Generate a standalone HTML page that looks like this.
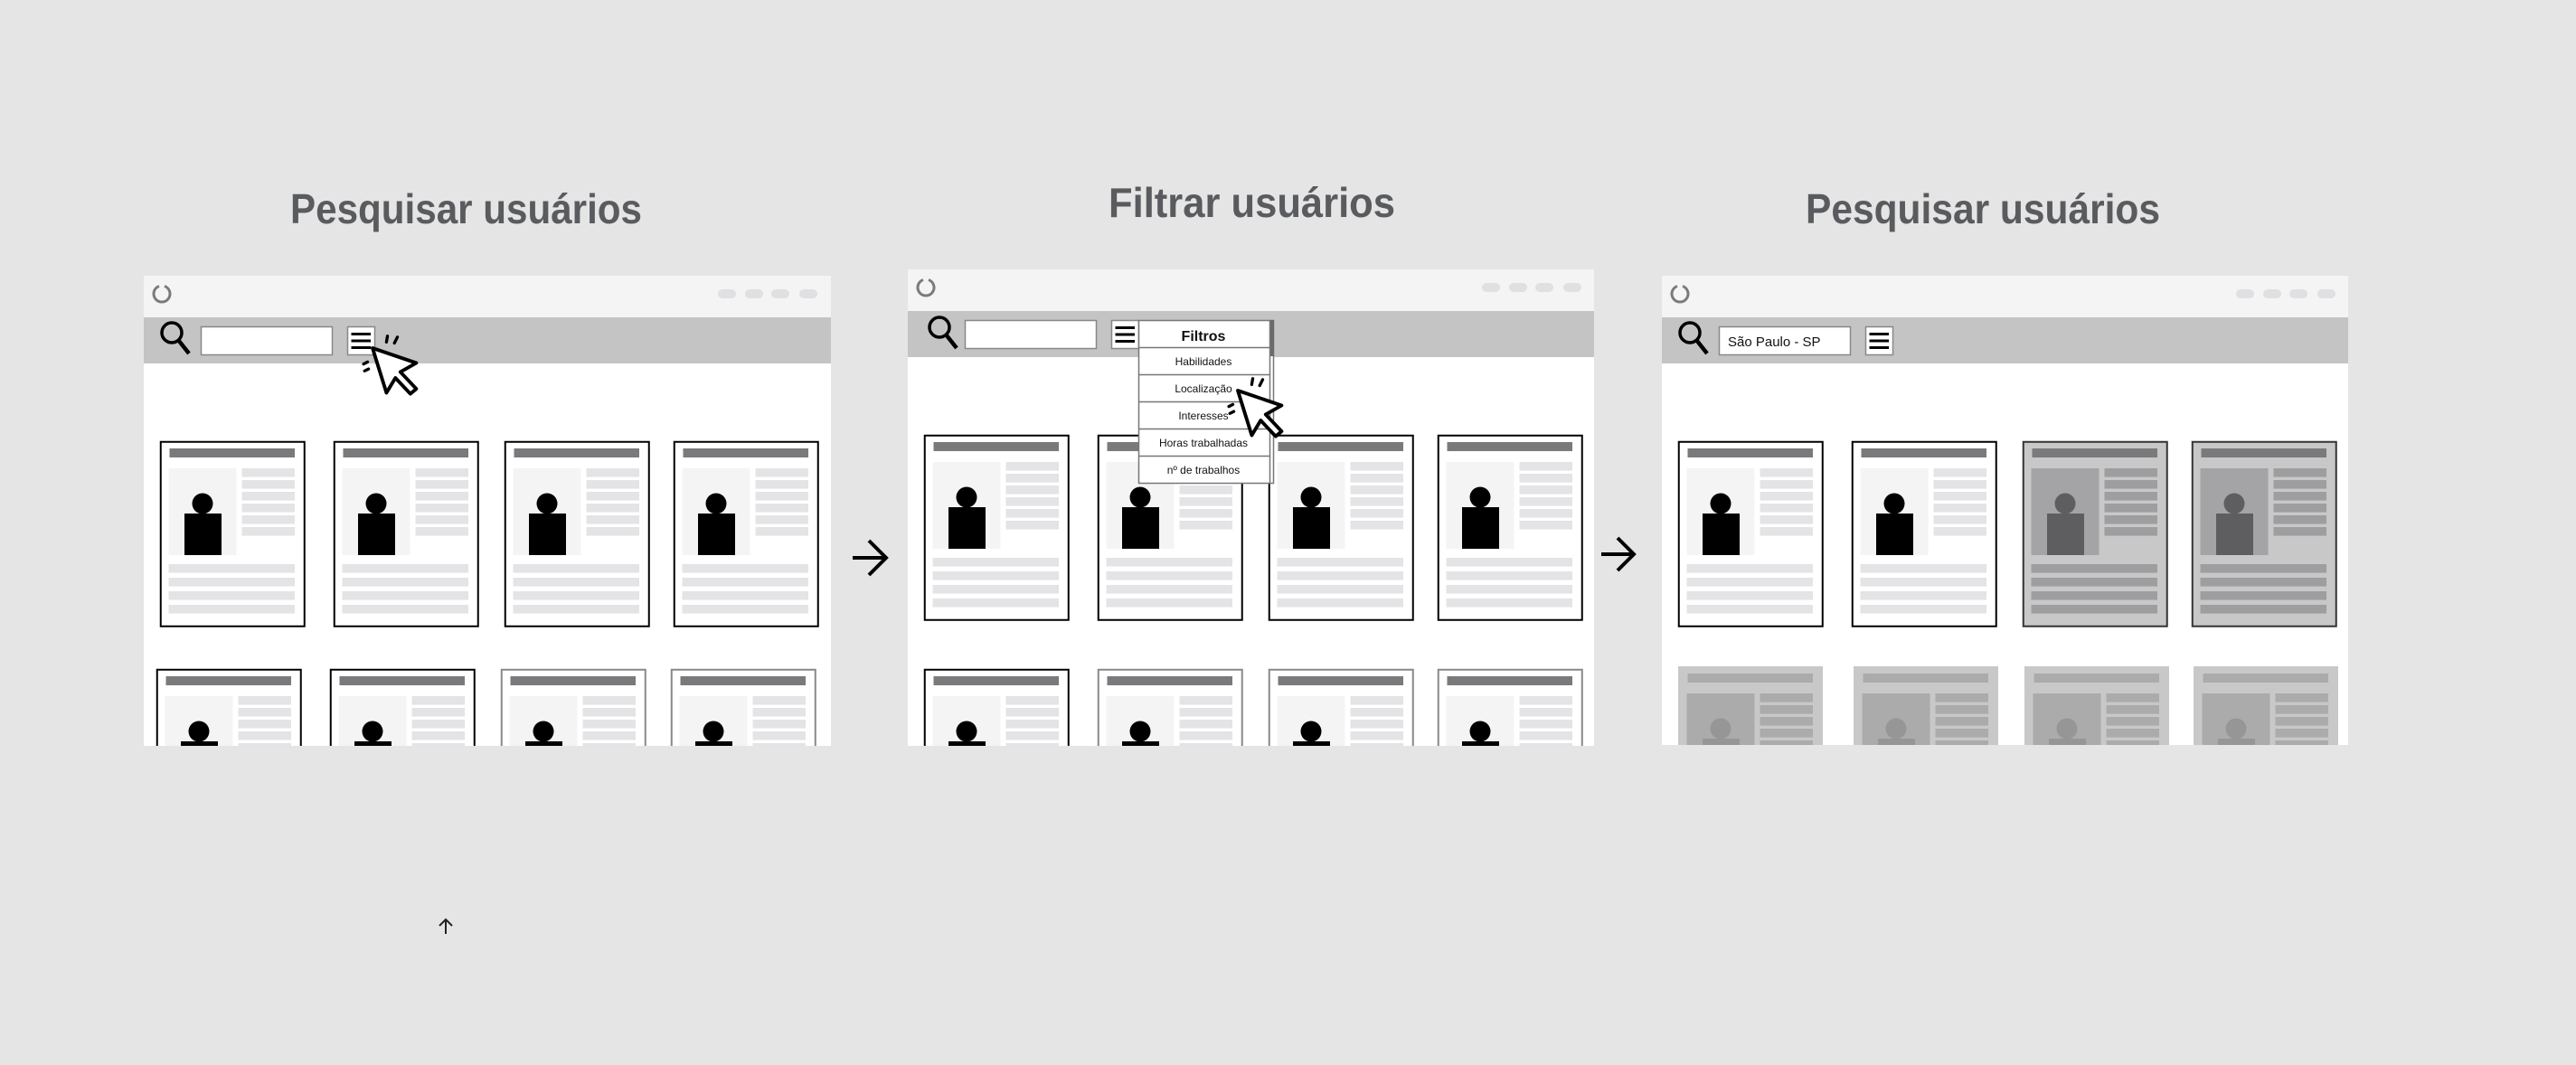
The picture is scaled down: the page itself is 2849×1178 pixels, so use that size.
<!DOCTYPE html>
<html><head><meta charset="utf-8"><style>
html,body{margin:0;padding:0;background:#e5e5e5;}
svg{display:block;}
</style></head><body>
<svg width="2849" height="1178" viewBox="0 0 2849 1178" xmlns="http://www.w3.org/2000/svg" font-family="'Liberation Sans', sans-serif">
<defs>
<symbol id="card" overflow="visible">
  <rect x="0.75" y="0.75" width="159" height="204" fill="#fff" stroke="#000" stroke-width="2"/>
  <rect x="10.5" y="8" width="138.5" height="10" fill="#7a7a7c"/>
  <rect x="9.5" y="30" width="75" height="96" fill="#f4f4f4"/>
  <circle cx="47" cy="69" r="11.5" fill="#000"/>
  <rect x="27" y="80" width="41" height="46" fill="#000"/>
  <g fill="#e4e4e6">
    <rect x="90.5" y="30" width="58.5" height="9.6"/><rect x="90.5" y="43" width="58.5" height="9.6"/>
    <rect x="90.5" y="56" width="58.5" height="9.6"/><rect x="90.5" y="69" width="58.5" height="9.6"/>
    <rect x="90.5" y="82" width="58.5" height="9.6"/><rect x="90.5" y="95" width="58.5" height="9.6"/>
    <rect x="9.5" y="136" width="139.5" height="9.6"/><rect x="9.5" y="151" width="139.5" height="9.6"/>
    <rect x="9.5" y="166" width="139.5" height="9.6"/><rect x="9.5" y="181" width="139.5" height="9.6"/>
  </g>
</symbol>
<symbol id="cardL" overflow="visible">
  <rect x="0.75" y="0.75" width="159" height="204" fill="#fff" stroke="#888" stroke-width="2"/>
  <rect x="10.5" y="8" width="138.5" height="10" fill="#7a7a7c"/>
  <rect x="9.5" y="30" width="75" height="96" fill="#f4f4f4"/>
  <circle cx="47" cy="69" r="11.5" fill="#000"/>
  <rect x="27" y="80" width="41" height="46" fill="#000"/>
  <g fill="#e4e4e6">
    <rect x="90.5" y="30" width="58.5" height="9.6"/><rect x="90.5" y="43" width="58.5" height="9.6"/>
    <rect x="90.5" y="56" width="58.5" height="9.6"/><rect x="90.5" y="69" width="58.5" height="9.6"/>
    <rect x="90.5" y="82" width="58.5" height="9.6"/><rect x="90.5" y="95" width="58.5" height="9.6"/>
  </g>
</symbol>
<symbol id="cardG" overflow="visible">
  <rect x="0.75" y="0.75" width="159" height="204" fill="#c8c8c8" stroke="#333" stroke-width="2"/>
  <rect x="10.5" y="8" width="138.5" height="10" fill="#7a7a7c"/>
  <rect x="9.5" y="30" width="75" height="96" fill="#a4a4a6"/>
  <circle cx="47" cy="69" r="11.5" fill="#5e5e60"/>
  <rect x="27" y="80" width="41" height="46" fill="#5e5e60"/>
  <g fill="#9e9ea0">
    <rect x="90.5" y="30" width="58.5" height="9.6"/><rect x="90.5" y="43" width="58.5" height="9.6"/>
    <rect x="90.5" y="56" width="58.5" height="9.6"/><rect x="90.5" y="69" width="58.5" height="9.6"/>
    <rect x="90.5" y="82" width="58.5" height="9.6"/><rect x="90.5" y="95" width="58.5" height="9.6"/>
    <rect x="9.5" y="136" width="139.5" height="9.6"/><rect x="9.5" y="151" width="139.5" height="9.6"/>
    <rect x="9.5" y="166" width="139.5" height="9.6"/><rect x="9.5" y="181" width="139.5" height="9.6"/>
  </g>
</symbol>
<symbol id="cardF" overflow="visible">
  <rect x="0" y="0" width="160" height="205" fill="#c8c8c8"/>
  <rect x="10.5" y="8" width="138.5" height="10" fill="#ababab"/>
  <rect x="9.5" y="30" width="75" height="96" fill="#ababab"/>
  <circle cx="47" cy="69" r="11.5" fill="#969696"/>
  <rect x="27" y="80" width="41" height="46" fill="#969696"/>
  <g fill="#ababab">
    <rect x="90.5" y="30" width="58.5" height="9.6"/><rect x="90.5" y="43" width="58.5" height="9.6"/>
    <rect x="90.5" y="56" width="58.5" height="9.6"/><rect x="90.5" y="69" width="58.5" height="9.6"/>
    <rect x="90.5" y="82" width="58.5" height="9.6"/><rect x="90.5" y="95" width="58.5" height="9.6"/>
  </g>
</symbol>
<symbol id="spin" overflow="visible">
  <path d="M3 -8.5 A9 9 0 1 1 -3 -8.5" fill="none" stroke="#7a7a7a" stroke-width="3"/>
</symbol>
<symbol id="btns" overflow="visible">
  <rect x="0" y="0" width="20" height="10" rx="5" fill="#e0e0e3"/>
  <rect x="30" y="0" width="20" height="10" rx="5" fill="#e0e0e3"/>
  <rect x="59" y="0" width="20" height="10" rx="5" fill="#e0e0e3"/>
  <rect x="90" y="0" width="20" height="10" rx="5" fill="#e0e0e3"/>
</symbol>
<symbol id="search" overflow="visible">
  <circle cx="0" cy="0" r="11" fill="none" stroke="#000" stroke-width="3.5"/>
  <line x1="7.5" y1="8.5" x2="19" y2="23" stroke="#000" stroke-width="4.5"/>
</symbol>
<symbol id="menu" overflow="visible">
  <rect x="0.5" y="0.5" width="30" height="31" fill="#fff" stroke="#888" stroke-width="1.5"/>
  <rect x="4.5" y="7" width="21.5" height="3" fill="#000"/>
  <rect x="4.5" y="14.5" width="21.5" height="3" fill="#000"/>
  <rect x="4.5" y="22" width="21.5" height="3" fill="#000"/>
</symbol>
<symbol id="cursor" overflow="visible">
  <g transform="scale(1.1)">
  <path d="M0 0 L44 15 L28 24 L44 41 L38 46 L23 30 L14 45 Z" fill="#fff" stroke="#000" stroke-width="3.5" stroke-linejoin="round"/>
  <line x1="14" y1="-6" x2="15" y2="-12" stroke="#000" stroke-width="3" stroke-linecap="round"/>
  <line x1="22" y1="-5" x2="25" y2="-11" stroke="#000" stroke-width="3" stroke-linecap="round"/>
  <line x1="-5" y1="14" x2="-9" y2="16" stroke="#000" stroke-width="3" stroke-linecap="round"/>
  <line x1="-8" y1="23" x2="-4" y2="21" stroke="#000" stroke-width="3" stroke-linecap="round"/>
  </g>
</symbol>
<clipPath id="c1"><rect x="159" y="402" width="760" height="423"/></clipPath>
<clipPath id="c2"><rect x="1004" y="395" width="759" height="430"/></clipPath>
<clipPath id="c3"><rect x="1838" y="402" width="759" height="422"/></clipPath>
</defs>

<rect width="2849" height="1178" fill="#e5e5e5"/>

<g fill="#5a5b5e" font-weight="bold" font-size="46">
  <text x="321" y="247" textLength="389" lengthAdjust="spacingAndGlyphs">Pesquisar usuários</text>
  <text x="1226" y="240" textLength="317" lengthAdjust="spacingAndGlyphs">Filtrar usuários</text>
  <text x="1997" y="247" textLength="392" lengthAdjust="spacingAndGlyphs">Pesquisar usuários</text>
</g>

<!-- Frame 1 -->
<rect x="159" y="305" width="760" height="46" fill="#f4f4f4"/>
<rect x="159" y="351" width="760" height="51" fill="#c4c4c4"/>
<rect x="159" y="402" width="760" height="423" fill="#fff"/>
<use href="#spin" x="179" y="325"/>
<use href="#btns" x="794" y="320"/>
<use href="#search" x="190" y="368"/>
<rect x="222.5" y="361.5" width="145" height="31" fill="#fff" stroke="#888" stroke-width="1.5"/>
<use href="#menu" x="384" y="361"/>
<g clip-path="url(#c1)">
  <use href="#card" x="177" y="488"/><use href="#card" x="369" y="488"/>
  <use href="#card" x="558" y="488"/><use href="#card" x="745" y="488"/>
  <use href="#card" x="173" y="740"/><use href="#card" x="365" y="740"/>
  <use href="#cardL" x="554" y="740"/><use href="#cardL" x="742" y="740"/>
</g>
<use href="#cursor" x="412" y="385"/>

<g stroke="#000" stroke-width="4" fill="none">
  <line x1="943" y1="617" x2="980" y2="617"/>
  <polyline points="961,598 980,617 961,636"/>
</g>

<!-- Frame 2 -->
<rect x="1004" y="298" width="759" height="46" fill="#f4f4f4"/>
<rect x="1004" y="344" width="759" height="51" fill="#c4c4c4"/>
<rect x="1004" y="395" width="759" height="430" fill="#fff"/>
<use href="#spin" x="1024" y="318"/>
<use href="#btns" x="1639" y="313"/>
<use href="#search" x="1039" y="362"/>
<rect x="1067.5" y="354.5" width="145" height="31" fill="#fff" stroke="#888" stroke-width="1.5"/>
<use href="#menu" x="1229" y="354"/>
<g clip-path="url(#c2)">
  <use href="#card" x="1022" y="481"/><use href="#card" x="1214" y="481"/>
  <use href="#card" x="1403" y="481"/><use href="#card" x="1590" y="481"/>
  <use href="#card" x="1022" y="740"/><use href="#cardL" x="1214" y="740"/>
  <use href="#cardL" x="1403" y="740"/><use href="#cardL" x="1590" y="740"/>
</g>
<rect x="1259.5" y="354.5" width="149" height="180" fill="#fff" stroke="#777" stroke-width="1.5"/>
<rect x="1404" y="354" width="5" height="40" fill="#6a6a6a"/>
<g stroke="#777" stroke-width="1.5">
  <line x1="1259" y1="384.5" x2="1404" y2="384.5"/>
  <line x1="1259" y1="414.5" x2="1404" y2="414.5"/>
  <line x1="1259" y1="444.5" x2="1404" y2="444.5"/>
  <line x1="1259" y1="474.5" x2="1404" y2="474.5"/>
  <line x1="1259" y1="504.5" x2="1404" y2="504.5"/>
  <line x1="1404.5" y1="354" x2="1404.5" y2="535"/>
</g>
<g text-anchor="middle" fill="#111">
  <text x="1331" y="377" font-size="16" font-weight="bold">Filtros</text>
  <g font-size="12">
    <text x="1331" y="404">Habilidades</text>
    <text x="1331" y="434">Localização</text>
    <text x="1331" y="464">Interesses</text>
    <text x="1331" y="494">Horas trabalhadas</text>
    <text x="1331" y="524">nº de trabalhos</text>
  </g>
</g>
<use href="#cursor" x="1369" y="432"/>

<g stroke="#000" stroke-width="4" fill="none">
  <line x1="1771" y1="613" x2="1807" y2="613"/>
  <polyline points="1789,595 1807,613 1789,631"/>
</g>

<!-- Frame 3 -->
<rect x="1838" y="305" width="759" height="46" fill="#f4f4f4"/>
<rect x="1838" y="351" width="759" height="51" fill="#c4c4c4"/>
<rect x="1838" y="402" width="759" height="422" fill="#fff"/>
<use href="#spin" x="1858" y="325"/>
<use href="#btns" x="2473" y="320"/>
<use href="#search" x="1869" y="368"/>
<rect x="1901.5" y="361.5" width="145" height="31" fill="#fff" stroke="#888" stroke-width="1.5"/>
<text x="1911" y="383" font-size="15" fill="#111">São Paulo - SP</text>
<use href="#menu" x="2063" y="361"/>
<g clip-path="url(#c3)">
  <use href="#card" x="1856" y="488"/><use href="#card" x="2048" y="488"/>
  <use href="#cardG" x="2237" y="488"/><use href="#cardG" x="2424" y="488"/>
  <use href="#cardF" x="1856" y="737"/><use href="#cardF" x="2050" y="737"/>
  <use href="#cardF" x="2239" y="737"/><use href="#cardF" x="2426" y="737"/>
</g>

<g stroke="#222" stroke-width="2" fill="none">
  <line x1="493" y1="1018" x2="493" y2="1033"/>
  <polyline points="486,1024 493,1017 500,1024"/>
</g>
</svg>
</body></html>
